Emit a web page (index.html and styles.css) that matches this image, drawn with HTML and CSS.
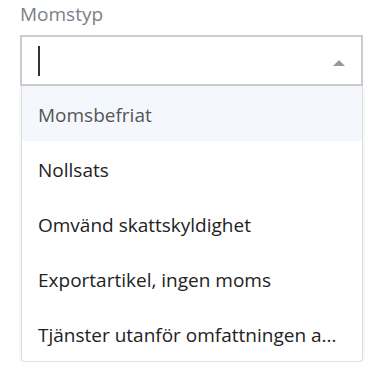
FILE: index.html
```html
<!DOCTYPE html>
<html lang="sv">
<head>
    <meta charset="UTF-8">
    <meta name="viewport" content="width=device-width, initial-scale=1.0">
    <title>Momstyp</title>
    <link rel="stylesheet" href="styles.css">
</head>
<body>
    <div class="field">
        <label class="field-label" for="vat">Momstyp</label>
        <div class="select-box" id="vat">
            <span class="caret"></span>
            <span class="arrow"></span>
        </div>

        <!-- lista med alternativ -->
        <ul class="options">
            <li class="option active">Momsbefriat</li>
            <li class="option">Nollsats</li>
            <li class="option">Omvänd skattskyldighet</li>
            <li class="option">Exportartikel, ingen moms</li>
            <li class="option">Tjänster utanför omfattningen a...</li>
        </ul>
    </div>
</body>
</html>
```

FILE: styles.css
```css
body {
    margin: 0;
    background-color: #fff;
    font-family: "Open Sans", "Noto Sans", sans-serif;
    color: #222;
}

.field {
    width: 343px;
    padding: 1px 10px 0 20px;
}

.field-label {
    display: block;
    font-size: 19px;
    line-height: 26px;
    color: #7b8088;
    margin-bottom: 8px;
}

.select-box {
    box-sizing: border-box;
    height: 51px;
    border: 2px solid #cccccc;
    padding: 0 16px;
    display: flex;
    align-items: center;
    justify-content: space-between;
}

.caret {
    width: 2px;
    height: 30px;
    background-color: #333;
}

.arrow {
    width: 0;
    height: 0;
    margin-top: 5px;
    border-left: 6px solid transparent;
    border-right: 6px solid transparent;
    border-bottom: 6px solid #999;
}

.options {
    list-style: none;
    margin: 0 0 0 1px;
    padding: 0;
    border: 1px solid #dddddd;
    border-top: none;
    border-radius: 0 0 4px 4px;
    box-shadow: 0 2px 4px rgba(0, 0, 0, 0.08);
}

.option {
    box-sizing: border-box;
    height: 55px;
    padding: 16px 16px 13px 16px;
    font-size: 19px;
    line-height: 26px;
    white-space: nowrap;
}

.option.active {
    background-color: #f4f8fc;
    color: #555;
}
```
